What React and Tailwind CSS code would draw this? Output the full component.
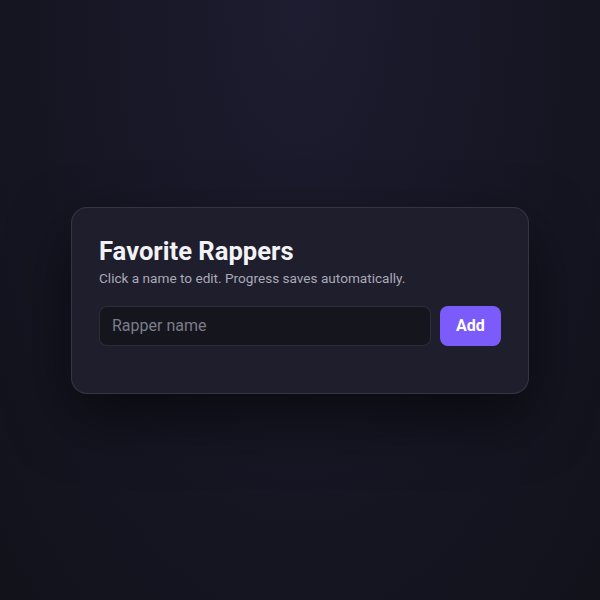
import React, { useState } from "react";

const App = () => {
  const [name, setName] = useState("");
  const [rappers, setRappers] = useState([]);

  const add = () => {
    if (!name.trim()) return;
    setRappers([...rappers, name.trim()]);
    setName("");
  };

  return (
    <div
      className="min-h-screen w-full flex items-center justify-center bg-[radial-gradient(ellipse_at_50%_0%,#1e1c30_0%,#171726_45%,#12121b_100%)]"
      style={{ fontFamily: "Roboto, 'Liberation Sans', sans-serif" }}
    >
      <div className="w-[458px] rounded-2xl border border-white/10 bg-[#1f1e2c] px-[27px] pt-[27px] pb-[47px] shadow-[0_24px_60px_rgba(0,0,0,0.55)]">
        <h1 className="text-[25.6px] leading-8 font-bold text-[#f2f2f7]">
          Favorite Rappers
        </h1>
        <p className="mt-px text-[13.6px] leading-5 text-[#a9a9b8]">
          Click a name to edit. Progress saves automatically.
        </p>
        <div className="mt-[18px] flex gap-[9px]">
          <input
            value={name}
            onChange={(e) => setName(e.target.value)}
            onKeyDown={(e) => e.key === "Enter" && add()}
            placeholder="Rapper name"
            className="h-10 flex-1 rounded-lg border border-white/10 bg-[#15151d] px-3 text-[16px] text-[#e5e5ee] placeholder:text-[#7c7c8a] outline-none"
          />
          <button
            onClick={add}
            className="h-10 w-[61px] rounded-lg bg-[#7b5cfa] text-[16px] font-bold text-white"
          >
            Add
          </button>
        </div>
        {rappers.length > 0 && (
          <ul className="mt-4 space-y-2">
            {rappers.map((r, i) => (
              <li key={i} className="text-[#e5e5ee]">
                {r}
              </li>
            ))}
          </ul>
        )}
      </div>
    </div>
  );
};

export default App;
